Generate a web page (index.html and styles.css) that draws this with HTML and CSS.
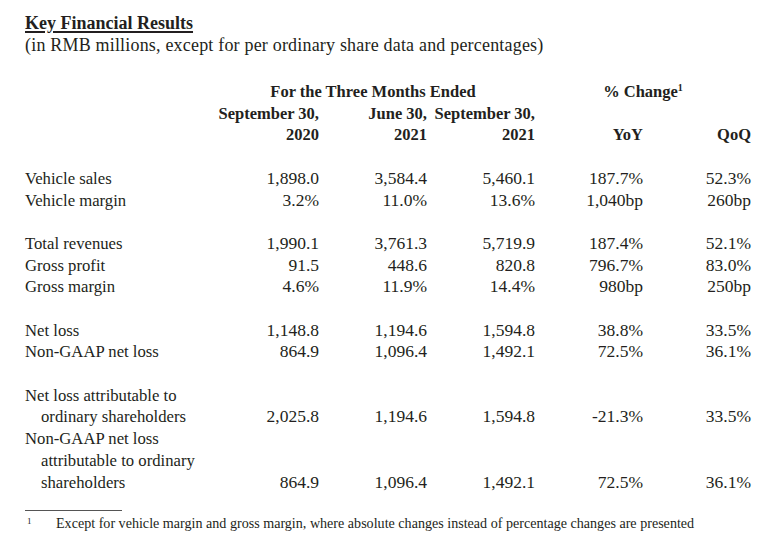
FILE: index.html
```html
<!DOCTYPE html>
<html>
<head>
<meta charset="utf-8">
<link rel="stylesheet" href="styles.css">
</head>
<body>
<div class="page">
  <h1 class="title">Key Financial Results</h1>
  <p class="subtitle">(in RMB millions, except for per ordinary share data and percentages)</p>
  <table class="fin">
    <colgroup>
      <col class="c-label"><col class="c-num"><col class="c-num"><col class="c-num"><col class="c-num"><col class="c-num">
    </colgroup>
    <thead>
      <tr>
        <th></th>
        <th colspan="3" class="group g-period">For the Three Months Ended</th>
        <th colspan="2" class="group g-change">% Change<sup>1</sup></th>
      </tr>
      <tr>
        <th></th>
        <th>September 30,</th>
        <th>June 30,</th>
        <th>September 30,</th>
        <th></th>
        <th></th>
      </tr>
      <tr>
        <th></th>
        <th>2020</th>
        <th>2021</th>
        <th>2021</th>
        <th>YoY</th>
        <th>QoQ</th>
      </tr>
    </thead>
    <tbody>
      <tr class="gap"><td colspan="6"></td></tr>
      <tr><td class="lbl">Vehicle sales</td><td>1,898.0</td><td>3,584.4</td><td>5,460.1</td><td>187.7%</td><td>52.3%</td></tr>
      <tr><td class="lbl">Vehicle margin</td><td>3.2%</td><td>11.0%</td><td>13.6%</td><td>1,040bp</td><td>260bp</td></tr>
      <tr class="gap"><td colspan="6"></td></tr>
      <tr><td class="lbl">Total revenues</td><td>1,990.1</td><td>3,761.3</td><td>5,719.9</td><td>187.4%</td><td>52.1%</td></tr>
      <tr><td class="lbl">Gross profit</td><td>91.5</td><td>448.6</td><td>820.8</td><td>796.7%</td><td>83.0%</td></tr>
      <tr><td class="lbl">Gross margin</td><td>4.6%</td><td>11.9%</td><td>14.4%</td><td>980bp</td><td>250bp</td></tr>
      <tr class="gap"><td colspan="6"></td></tr>
      <tr><td class="lbl">Net loss</td><td>1,148.8</td><td>1,194.6</td><td>1,594.8</td><td>38.8%</td><td>33.5%</td></tr>
      <tr><td class="lbl">Non-GAAP net loss</td><td>864.9</td><td>1,096.4</td><td>1,492.1</td><td>72.5%</td><td>36.1%</td></tr>
      <tr class="gap"><td colspan="6"></td></tr>
      <tr><td class="lbl">Net loss attributable to<span class="indent">ordinary shareholders</span></td><td>2,025.8</td><td>1,194.6</td><td>1,594.8</td><td>-21.3%</td><td>33.5%</td></tr>
      <tr><td class="lbl">Non-GAAP net loss<span class="indent">attributable to ordinary</span><span class="indent">shareholders</span></td><td>864.9</td><td>1,096.4</td><td>1,492.1</td><td>72.5%</td><td>36.1%</td></tr>
    </tbody>
  </table>
  <div class="rule"></div>
  <p class="note"><span class="note-mark">1</span><span class="note-text">Except for vehicle margin and gross margin, where absolute changes instead of percentage changes are presented</span></p>
</div>
</body>
</html>
```
FILE: styles.css
```css
html, body {
  margin: 0;
  padding: 0;
  background: #ffffff;
}

.page {
  width: 775px;
  height: 542px;
  box-sizing: border-box;
  padding: 12px 24px 0 25px;
  font-family: "Liberation Serif", "Times New Roman", serif;
  color: #231f20;
}

.title {
  margin: 0;
  font-size: 18px;
  font-weight: bold;
  line-height: 22px;
  text-decoration: underline;
  text-decoration-thickness: 1.5px;
  text-underline-offset: 2px;
}

.subtitle {
  margin: 0;
  font-size: 18px;
  line-height: 22px;
  letter-spacing: 0.19px;
}

.fin {
  margin-top: 25px;
  width: 726px;
  table-layout: fixed;
  border-collapse: collapse;
  border-spacing: 0;
}

.c-label { width: 186px; }
.c-num { width: 108px; }

.fin th, .fin td {
  padding: 0;
  height: 21.7px;
  line-height: 21.7px;
  text-align: right;
  vertical-align: bottom;
  white-space: nowrap;
}

.fin th {
  font-size: 16.5px;
  font-weight: bold;
}

.fin th.group {
  text-align: center;
}

.g-period { padding-left: 21px; }
.g-change { padding-left: 32px; }

.fin th sup {
  font-size: 10px;
  line-height: 0;
  vertical-align: 6px;
}

.fin td {
  font-size: 17.5px;
}

.fin td.lbl {
  text-align: left;
  font-size: 16.7px;
}

.indent {
  display: block;
  padding-left: 16px;
}

.fin tr.gap td {
  height: 21.7px;
}

.rule {
  width: 97px;
  height: 1px;
  background: #555;
  margin-top: 17px;
}

.note {
  margin: 3px 0 0 0;
  font-size: 14.1px;
  line-height: 18px;
  display: flex;
  align-items: flex-start;
}

.note-mark {
  font-size: 9px;
  line-height: 14px;
  width: 29px;
  padding-left: 2px;
  flex: none;
}
```
